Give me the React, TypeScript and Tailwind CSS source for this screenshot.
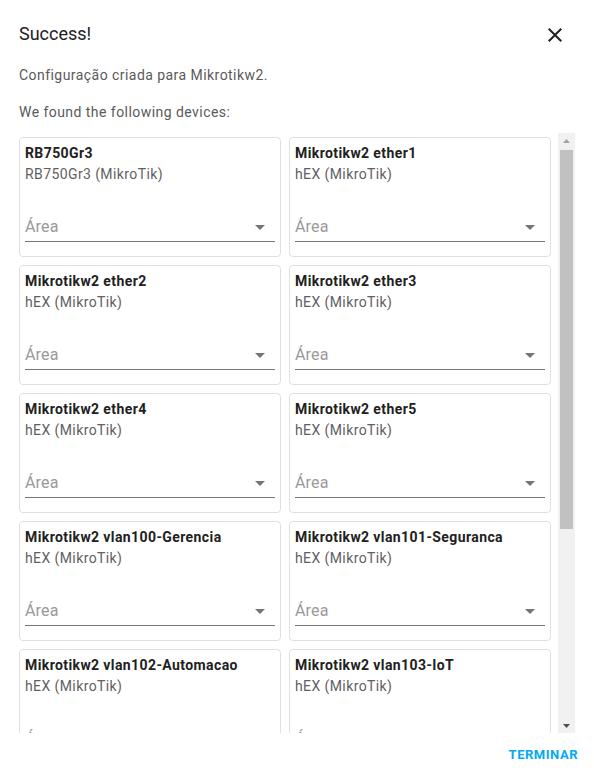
const devices = [
  { name: 'RB750Gr3', model: 'RB750Gr3 (MikroTik)' },
  { name: 'Mikrotikw2 ether1', model: 'hEX (MikroTik)' },
  { name: 'Mikrotikw2 ether2', model: 'hEX (MikroTik)' },
  { name: 'Mikrotikw2 ether3', model: 'hEX (MikroTik)' },
  { name: 'Mikrotikw2 ether4', model: 'hEX (MikroTik)' },
  { name: 'Mikrotikw2 ether5', model: 'hEX (MikroTik)' },
  { name: 'Mikrotikw2 vlan100-Gerencia', model: 'hEX (MikroTik)' },
  { name: 'Mikrotikw2 vlan101-Seguranca', model: 'hEX (MikroTik)' },
  { name: 'Mikrotikw2 vlan102-Automacao', model: 'hEX (MikroTik)' },
  { name: 'Mikrotikw2 vlan103-IoT', model: 'hEX (MikroTik)' },
];

function DeviceCard({ name, model }: { name: string; model: string }) {
  return (
    <div className="h-[120px] rounded border border-[#e0e0e0] px-[5px] pt-[6px] flex flex-col">
      <div className="text-[14px] leading-[18px] font-bold tracking-[0.4px] text-[#212121]">{name}</div>
      <div className="text-[14px] leading-[20px] mt-[2px] tracking-[0.4px] text-[#5f5f5f]">{model}</div>
      <div className="mt-[33px] flex items-center justify-between border-b border-[#757575] pb-[4px]">
        <span className="text-[16px] leading-[20px] tracking-[0.15px] text-[#9a9a9a]">Área</span>
        <svg width="10" height="5" viewBox="0 0 10 5" className="mr-[10px]">
          <path d="M0 0 L10 0 L5 5 Z" fill="#757575" />
        </svg>
      </div>
    </div>
  );
}

function FakeScrollbar() {
  return (
    <div className="w-[17px] shrink-0 bg-[#f1f1f1] flex flex-col items-stretch">
      <div className="h-[15px] flex items-center justify-center">
        <svg width="7" height="4" viewBox="0 0 7 4">
          <path d="M0 4 L7 4 L3.5 0 Z" fill="#a3a3a3" />
        </svg>
      </div>
      <div className="h-[379px] mt-[2px] mx-[2px] bg-[#c1c1c1]" />
      <div className="flex-1" />
      <div className="h-[15px] flex items-center justify-center">
        <svg width="7" height="4" viewBox="0 0 7 4">
          <path d="M0 0 L7 0 L3.5 4 Z" fill="#505050" />
        </svg>
      </div>
    </div>
  );
}

export default function App() {
  return (
    <div
      className="w-[594px] h-[775px] bg-white flex flex-col"
      style={{ fontFamily: 'Roboto, "Liberation Sans", sans-serif' }}
    >
      <div className="flex items-center justify-between pl-[19px] pr-[27px] pt-[20px]">
        <h2 className="text-[18px] leading-[26px] text-[#212121]">Success!</h2>
        <button className="text-[#212121] mt-[3px]">
          <svg width="24" height="24" viewBox="0 0 24 24" fill="currentColor">
            <path d="M19 6.41 17.59 5 12 10.59 6.41 5 5 6.41 10.59 12 5 17.59 6.41 19 12 13.41 17.59 19 19 17.59 13.41 12z" />
          </svg>
        </button>
      </div>
      <p className="pl-[19px] mt-[18px] text-[14px] leading-[20px] tracking-[0.45px] text-[#5a5a5a]">
        Configuração criada para Mikrotikw2.
      </p>
      <p className="pl-[19px] mt-[17px] text-[14px] leading-[20px] tracking-[0.45px] text-[#5a5a5a]">
        We found the following devices:
      </p>
      <div className="ml-[19px] mt-[11px] h-[600px] w-[556px] flex">
        <div className="flex-1 overflow-hidden">
          <div className="grid grid-cols-[262px_262px] gap-2 pt-[4px]">
            {devices.map((d) => (
              <DeviceCard key={d.name} name={d.name} model={d.model} />
            ))}
          </div>
        </div>
        <FakeScrollbar />
      </div>
      <div className="flex justify-end pr-[16px] pt-[14px]">
        <button className="text-[13px] leading-[16px] font-bold tracking-[0.04em] text-[#03a9f4]">
          TERMINAR
        </button>
      </div>
    </div>
  );
}
